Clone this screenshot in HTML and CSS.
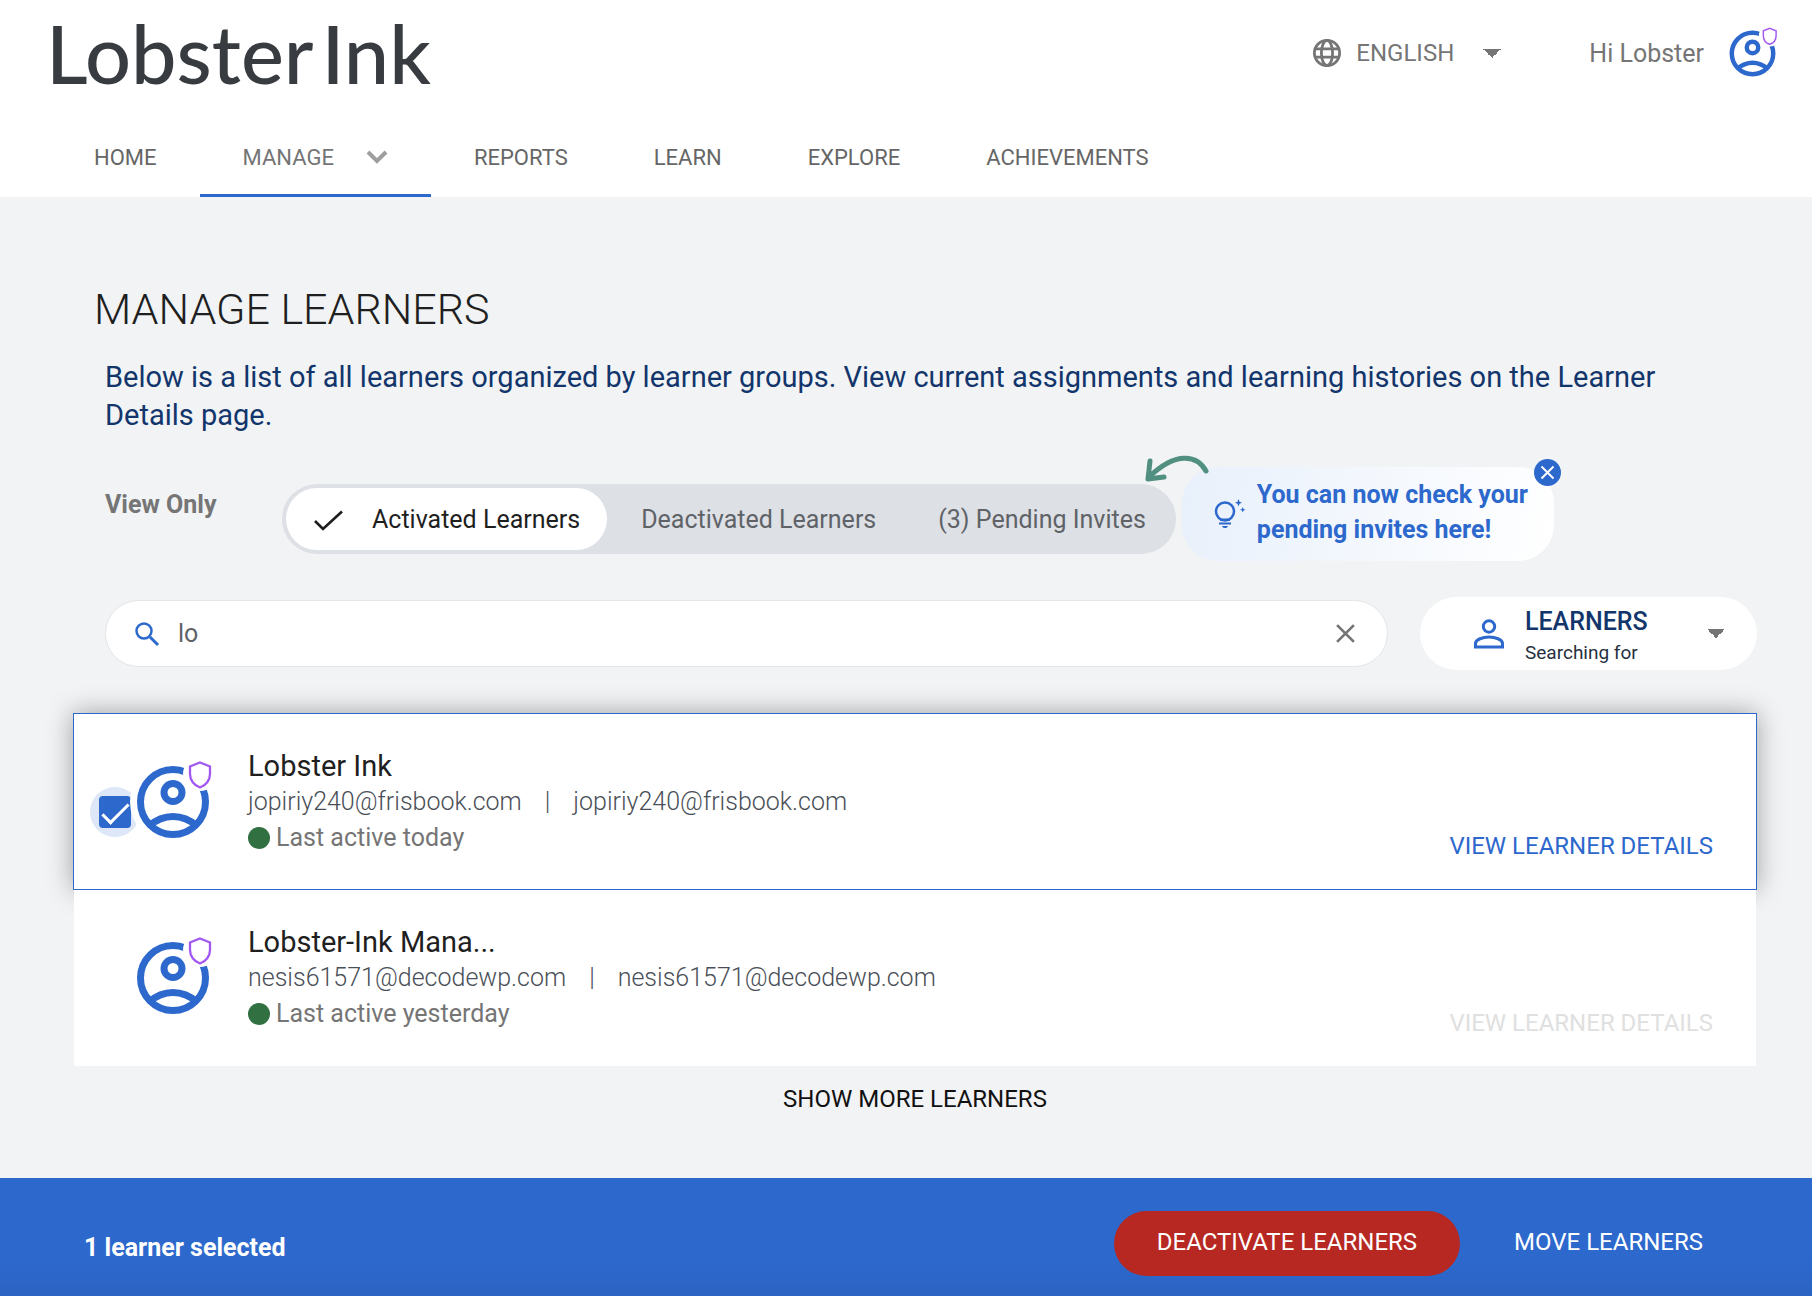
FILE: index.html
```html
<!DOCTYPE html>
<html lang="en">
<head>
    <meta charset="UTF-8">
    <meta name="viewport" content="width=device-width, initial-scale=1.0">
    <title>Manage Learners</title>
    <link rel="stylesheet" href="styles.css">
</head>
<body>
    <!-- Shared icons -->
    <svg class="sprite" aria-hidden="true">
        <symbol id="avatar" viewBox="0 0 80 80" overflow="visible">
            <mask id="shield-cut" maskUnits="userSpaceOnUse" x="0" y="0" width="80" height="80">
                <rect width="80" height="80" fill="#fff"/>
                <circle cx="67" cy="12" r="17" fill="#000"/>
            </mask>
            <g fill="none" stroke="#2d68cd" stroke-width="7">
                <circle cx="40" cy="40" r="32.5" mask="url(#shield-cut)"/>
                <circle cx="40" cy="30.500" r="9"/>
                <path d="M16 64 Q27 54.500 40 54.500 T64 64"/>
            </g>
            <path d="M67 0.500 L77 4.500 V12 C77 18 73 23.500 67 25.500 C61 23.500 57 18 57 12 V4.500 Z" fill="none" stroke="#a259f0" stroke-width="2.300"/>
        </symbol>
        <symbol id="cross" viewBox="0 0 20 20">
            <path d="M2 2 L18 18 M18 2 L2 18" fill="none" stroke="currentColor" stroke-width="2.600"/>
        </symbol>
    </svg>

    <header class="header">
        <div class="topbar">
            <a class="logo" href="#"><span>Lobster</span> <span>Ink</span></a>
            <div class="language">
                <svg class="globe" viewBox="2 2 20 20" aria-hidden="true">
                    <g fill="none" stroke="#757575" stroke-width="2">
                        <circle cx="12" cy="12" r="9"/>
                        <ellipse cx="12" cy="12" rx="4" ry="9"/>
                        <path d="M3.600 9 H20.400 M3.600 15 H20.400"/>
                    </g>
                </svg>
                <select class="language-select" aria-label="Language">
                    <option>ENGLISH</option>
                    <option>FRENCH</option>
                    <option>SPANISH</option>
                </select>
            </div>
            <span class="greeting">Hi Lobster</span>
            <a class="profile" href="#" aria-label="Profile">
                <svg class="profile-icon"><use href="#avatar"/></svg>
            </a>
        </div>
        <nav class="nav">
            <a class="nav-item" href="#">HOME</a>
            <a class="nav-item active" href="#">MANAGE
                <svg class="nav-chevron" viewBox="0 0 22 14" aria-hidden="true"><path d="M2 2 L11 11 L20 2" fill="none" stroke="#9e9e9e" stroke-width="4"/></svg>
            </a>
            <a class="nav-item" href="#">REPORTS</a>
            <a class="nav-item" href="#">LEARN</a>
            <a class="nav-item" href="#">EXPLORE</a>
            <a class="nav-item" href="#">ACHIEVEMENTS</a>
        </nav>
    </header>

    <main class="main">
        <h1>MANAGE LEARNERS</h1>
        <p class="intro">Below is a list of all learners organized by learner groups. View current assignments and learning histories on the Learner Details page.</p>

        <div class="filters">
            <span class="filters-label">View Only</span>
            <div class="segment">
                <button class="segment-btn selected" type="button">
                    <svg class="tick" viewBox="0 0 32 26" aria-hidden="true"><path d="M3 15 L11 23 L30 5.500" fill="none" stroke="#1f1f1f" stroke-width="2.700"/></svg>
                    Activated Learners
                </button>
                <button class="segment-btn" type="button">Deactivated Learners</button>
                <button class="segment-btn" type="button">(3) Pending Invites</button>
            </div>
            <div class="tip">
                <svg class="tip-arrow" viewBox="0 0 66 30" aria-hidden="true">
                    <path d="M62 17 C52 -1 30 -1 5 23 M6 7 L4 25 L20 23" fill="none" stroke="#518f80" stroke-width="5" stroke-linecap="round" stroke-linejoin="round"/>
                </svg>
                <svg class="bulb" viewBox="0 0 32 30" aria-hidden="true">
                    <circle cx="11" cy="12.500" r="9" fill="none" stroke="#2d68cd" stroke-width="2.500"/>
                    <path d="M6 19.500 H16 V22 H6 Z M5 23.500 H17 V25.500 H5 Z M8 27 H14 C13.500 28.500 12.500 29 11 29 C9.500 29 8.500 28.500 8 27 Z" fill="#2d68cd"/>
                    <path d="M24.500 0 L25.500 2.700 L28 3.700 L25.500 4.700 L24.500 7.400 L23.500 4.700 L21 3.700 L23.500 2.700 Z M28.700 8 L29.500 10 L31.500 10.800 L29.500 11.600 L28.700 13.600 L27.900 11.600 L26 10.800 L27.900 10 Z" fill="#2d68cd"/>
                </svg>
                <p class="tip-text">You can now check your<br>pending invites here!</p>
                <button class="tip-close" type="button" aria-label="Close tip"><svg class="tip-cross"><use href="#cross"/></svg></button>
            </div>
        </div>

        <div class="search-row">
            <div class="search">
                <svg class="search-icon" viewBox="0 0 24 24" aria-hidden="true"><path d="M15 15 L23 23" stroke="#2d68cd" stroke-width="3"/><circle cx="9" cy="9" r="7.500" fill="none" stroke="#2d68cd" stroke-width="2.500"/></svg>
                <input class="search-input" type="text" value="lo" aria-label="Search learners">
                <button class="search-clear" type="button" aria-label="Clear search"><svg class="clear-cross"><use href="#cross"/></svg></button>
            </div>
            <div class="scope">
                <svg class="person" viewBox="0 0 30 30" aria-hidden="true">
                    <g fill="none" stroke="#2d68cd" stroke-width="3">
                        <circle cx="15" cy="7.500" r="5.700"/>
                        <path d="M1.500 28 V24.500 C1.500 20.500 9 18 15 18 C21 18 28.500 20.500 28.500 24.500 V28 Z"/>
                    </g>
                </svg>
                <div class="scope-field">
                    <select class="scope-select" id="scope">
                        <option>LEARNERS</option>
                        <option>GROUPS</option>
                    </select>
                    <label class="scope-label" for="scope">Searching for</label>
                </div>
            </div>
        </div>

        <div class="learners">
            <article class="learner checked">
                <span class="check"><input type="checkbox" aria-label="Select Lobster Ink" checked></span>
                <svg class="avatar"><circle cx="40" cy="40" r="43" fill="#fff"/><use href="#avatar"/></svg>
                <div class="info">
                    <h2>Lobster Ink</h2>
                    <p class="emails"><span>jopiriy240@frisbook.com</span><span>|</span><span>jopiriy240@frisbook.com</span></p>
                    <p class="status">Last active today</p>
                </div>
                <a class="details" href="#">VIEW LEARNER DETAILS</a>
            </article>
            <article class="learner">
                <span class="check"><input type="checkbox" aria-label="Select Lobster-Ink Mana..."></span>
                <svg class="avatar"><circle cx="40" cy="40" r="43" fill="#fff"/><use href="#avatar"/></svg>
                <div class="info">
                    <h2>Lobster-Ink Mana...</h2>
                    <p class="emails"><span>nesis61571@decodewp.com</span><span>|</span><span>nesis61571@decodewp.com</span></p>
                    <p class="status">Last active yesterday</p>
                </div>
                <a class="details disabled" href="#">VIEW LEARNER DETAILS</a>
            </article>
        </div>
        <button class="more" type="button">SHOW MORE LEARNERS</button>
    </main>

    <footer class="actions">
        <span class="count">1 learner selected</span>
        <button class="action danger" type="button">DEACTIVATE LEARNERS</button>
        <button class="action" type="button">MOVE LEARNERS</button>
    </footer>
</body>
</html>
```
FILE: styles.css
```css
* {
    box-sizing: border-box;
}

body {
    margin: 0;
    min-height: 100vh;
    display: flex;
    flex-direction: column;
    background: #f1f3f5;
    font-family: Roboto, sans-serif;
    font-size: 25px;
    color: #1f1f1f;
}

h1, h2, p {
    margin: 0;
    font-weight: 400;
}

a {
    text-decoration: none;
}

button, input, select {
    font-family: inherit;
    font-size: inherit;
    border: none;
    background: none;
    padding: 0;
    margin: 0;
    outline: none;
}

button, select {
    cursor: pointer;
}

svg {
    flex-shrink: 0;
    overflow: visible;
}

.sprite {
    position: absolute;
    width: 0;
    height: 0;
}

/* Header */
.header {
    background: #fff;
}

.topbar {
    display: flex;
    align-items: center;
    height: 106px;
    padding: 0 34px 0 46px;
}

.logo {
    display: flex;
    gap: 8px;
    font-family: Lato, sans-serif;
    font-size: 81px;
    font-weight: 500;
    line-height: 106px;
    color: #383b40;
    margin-right: auto;
}

.language {
    display: flex;
    align-items: center;
    gap: 15px;
    margin-right: 88px;
}

.globe {
    width: 28px;
    height: 28px;
}

.language-select {
    appearance: none;
    width: 145px;
    font-size: 24px;
    color: #757575;
    background: linear-gradient(to bottom right, #757575 50%, transparent 50%) right center / 9px 9px no-repeat,
        linear-gradient(to bottom left, #757575 50%, transparent 50%) right 9px center / 9px 9px no-repeat;
}

.greeting {
    color: #757575;
    margin-right: 23px;
}

.profile {
    display: flex;
}

.profile-icon {
    width: 51px;
    height: 51px;
}

.nav {
    display: flex;
    padding-left: 51px;
}

.nav-item {
    display: flex;
    align-items: center;
    height: 91px;
    padding: 14px 43px 0;
    border-bottom: 3px solid transparent;
    font-size: 22px;
    color: #666;
}

.nav-item.active {
    color: #757575;
    border-color: #2d68cd;
}

.nav-chevron {
    width: 22px;
    height: 14px;
    margin-left: 32px;
}

/* Page content */
.main {
    flex: 1;
    display: flex;
    flex-direction: column;
    padding: 84px 55px 0 73px;
}

h1 {
    font-size: 43px;
    font-weight: 300;
    line-height: 56px;
    padding-left: 21px;
}

.intro {
    font-size: 29px;
    line-height: 38px;
    color: #12356b;
    margin: 21px 80px 33px 32px;
}

.filters {
    display: flex;
    align-items: center;
    margin-left: 32px;
}

.filters-label {
    width: 177px;
    font-weight: 700;
    color: #757575;
    padding-bottom: 29px;
}

.segment {
    display: flex;
    padding: 4px;
    border-radius: 35px;
    background: #dde0e5;
}

.segment-btn {
    display: flex;
    align-items: center;
    height: 62px;
    padding: 0 31px;
    border-radius: 31px;
    color: #5f6368;
}

.segment-btn:last-child {
    padding-right: 26px;
}

.segment-btn.selected {
    background: #fff;
    color: #1f1f1f;
    padding: 0 27px 0 26px;
    margin-right: 3px;
}

.tick {
    width: 32px;
    height: 26px;
    margin-right: 28px;
}

.tip {
    position: relative;
    display: flex;
    align-items: center;
    height: 94px;
    margin-left: 6px;
    margin-bottom: 10px;
    padding: 0 26px 4px 32px;
    border-radius: 36px;
    background: linear-gradient(100deg, #e8f0fb, #fff);
}

.tip-arrow {
    position: absolute;
    left: -38px;
    top: -13px;
    width: 66px;
    height: 30px;
}

.bulb {
    width: 32px;
    height: 30px;
    margin-top: 4px;
    margin-right: 11px;
}

.tip-text {
    font-weight: 700;
    line-height: 35px;
    color: #2d68cd;
}

.tip-close {
    position: absolute;
    right: -7px;
    top: -8px;
    width: 27px;
    height: 27px;
    display: flex;
    align-items: center;
    justify-content: center;
    border-radius: 50%;
    background: #2d68cd;
    color: #fff;
}

.tip-cross {
    width: 15px;
    height: 15px;
}

/* Search */
.search-row {
    display: flex;
    align-items: center;
    gap: 32px;
    margin: 26px 0 43px 32px;
}

.search {
    flex: 1;
    display: flex;
    align-items: center;
    height: 67px;
    padding: 0 31px 0 29px;
    border: 1px solid #e3e6e9;
    border-radius: 34px;
    background: #fff;
}

.search-icon {
    width: 24px;
    height: 24px;
    margin-right: 19px;
}

.search-input {
    flex: 1;
    color: #5f6368;
}

.search-clear {
    display: flex;
    color: #757575;
}

.clear-cross {
    width: 21px;
    height: 21px;
}

.scope {
    display: flex;
    align-items: center;
    gap: 21px;
    width: 337px;
    height: 73px;
    padding: 0 32px 0 54px;
    border-radius: 37px;
    background: #fff;
}

.person {
    width: 30px;
    height: 30px;
}

.scope-field {
    flex: 1;
    display: flex;
    flex-direction: column;
    padding-top: 5px;
    background: linear-gradient(to bottom right, #757575 50%, transparent 50%) right center / 9px 9px no-repeat,
        linear-gradient(to bottom left, #757575 50%, transparent 50%) right 9px center / 9px 9px no-repeat;
}

.scope-select {
    appearance: none;
    height: 34px;
    font-weight: 500;
    color: #12356b;
}

.scope-label {
    font-size: 19px;
    line-height: 30px;
    color: #263040;
}

/* Learner cards */
.learner {
    display: flex;
    align-items: center;
    height: 176px;
    padding: 0 43px 0 16px;
    margin: 0 1px;
    background: #fff;
    position: relative;
}

.learner.checked {
    margin: 0;
    height: 177px;
    border: 1px solid #2d68cd;
    box-shadow: 0 0 24px rgba(0, 0, 0, 0.35);
}

.check {
    display: flex;
    align-items: center;
    justify-content: center;
    width: 50px;
    height: 50px;
    margin-top: 20px;
    border-radius: 50%;
}

.check input {
    appearance: none;
    width: 32px;
    height: 32px;
    border-radius: 4px;
    opacity: 0;
    cursor: pointer;
}

.checked .check {
    background: #dde7f8;
}

.check input:checked {
    opacity: 1;
    background: #2d68cd;
}

.check input:checked::after {
    content: "";
    display: block;
    width: 10px;
    height: 24px;
    margin: 1px 0 0 10px;
    border: solid #fff;
    border-width: 0 3px 3px 0;
    transform: rotate(45deg);
}

.avatar {
    width: 80px;
    height: 80px;
    margin-left: -7px;
    margin-right: 35px;
}

.info {
    line-height: 36px;
    margin-right: auto;
}

h2 {
    font-size: 29px;
}

.emails {
    display: flex;
    gap: 23px;
    font-weight: 300;
    color: #4a4f57;
}

.status {
    display: flex;
    align-items: center;
    gap: 6px;
    color: #757575;
}

.status::before {
    content: "";
    width: 22px;
    height: 22px;
    border-radius: 50%;
    background: #317040;
}

.details {
    align-self: flex-end;
    margin-bottom: 25px;
    font-size: 24px;
    line-height: 36px;
    color: #2d68cd;
}

.details.disabled {
    color: #e0e0e0;
}

.more {
    align-self: center;
    margin: 15px 0 58px;
    font-size: 24px;
    line-height: 36px;
    color: #111;
}

/* Selection bar */
.actions {
    display: flex;
    align-items: center;
    flex-shrink: 0;
    height: 118px;
    padding: 12px 55px 0 84px;
    background: linear-gradient(#2d68cd 70%, #2b63c2);
    color: #fff;
}

.count {
    font-weight: 700;
    padding-top: 8px;
    margin-right: auto;
}

.action {
    height: 65px;
    padding: 0 54px 3px;
    font-size: 24px;
    color: #fff;
}

.action.danger {
    padding: 0 43px 3px;
    border-radius: 33px;
    background: #b72822;
}
```
